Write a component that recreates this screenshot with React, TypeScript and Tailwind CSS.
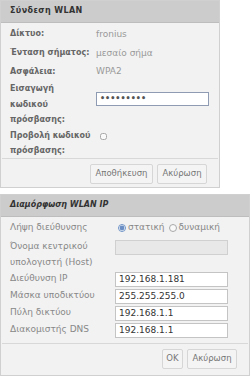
import React, { useState } from "react";

const font = { fontFamily: '"DejaVu Sans", Verdana, sans-serif' };

const Btn: React.FC<{ label: string; className?: string }> = ({ label, className }) => (
  <button className={"h-[20px] border border-[#d6d6d6] bg-[#f4f4f4] text-[8.5px] text-[#777] rounded-[2px] " + (className ?? "")}>
    {label}
  </button>
);

const IpRow: React.FC<{ label: string; value: string }> = ({ label, value }) => (
  <div className="flex items-center h-[17px]">
    <span className="w-[105px] text-[#888]">{label}</span>
    <input
      defaultValue={value}
      className="w-[113px] h-[15px] border border-[#c4c4c4] bg-white px-[3px] text-[9px] text-[#333] outline-none"
    />
  </div>
);

export default function App() {
  const [mode, setMode] = useState("static");
  const [show, setShow] = useState(false);

  return (
    <div className="w-[252px] h-[381px] bg-white text-[9px] leading-[1.3]" style={font}>
      {/* WLAN connection */}
      <div className="w-[220px] border border-[#d0d0d0] bg-[#f2f2f2]">
        <div className="h-[22px] flex items-center px-[9px] bg-[#cccccc] border-b border-[#bdbdbd] font-bold text-[8px] tracking-[0.4px] text-[#333]">
          Σύνδεση WLAN
        </div>
        <div className="px-[9px] pt-[2px] font-bold text-[8px] text-[#666]">
          <div className="flex items-center h-[19px]">
            <span className="w-[86px]">Δίκτυο:</span>
            <span className="font-normal text-[9px] text-[#999]">fronius</span>
          </div>
          <div className="flex items-center h-[19px]">
            <span className="w-[86px] whitespace-nowrap">Ένταση σήματος:</span>
            <span className="font-normal text-[9px] text-[#999]">μεσαίο σήμα</span>
          </div>
          <div className="flex items-center h-[18px]">
            <span className="w-[86px]">Ασφάλεια:</span>
            <span className="font-normal text-[9px] text-[#999]">WPA2</span>
          </div>
          <div className="flex items-start leading-[15.5px]">
            <span className="w-[86px]">
              Εισαγωγή
              <br />
              κωδικού
              <br />
              πρόσβασης:
            </span>
            <input
              type="password"
              defaultValue="password1"
              className="w-[113px] h-[14px] border border-[#8f9bb3] bg-white px-[3px] text-[8px] text-[#555] outline-none mt-[11px]"
            />
          </div>
          <div className="flex items-start leading-[15px]">
            <span className="w-[86px] whitespace-nowrap">
              Προβολή κωδικού
              <br />
              πρόσβασης:
            </span>
            <input
              type="checkbox"
              checked={show}
              onChange={(e) => setShow(e.target.checked)}
              className="w-[7px] h-[7px] ml-[4px] mt-[5px] accent-[#888] opacity-60"
            />
          </div>
        </div>
        <div className="border-t border-[#d8d8d8] mx-[1px] flex justify-end gap-[4px] pt-[5px] pb-[3px] pr-[11px]">
          <Btn label="Αποθήκευση" className="w-[63px]" />
          <Btn label="Ακύρωση" className="w-[50px]" />
        </div>
      </div>

      {/* WLAN IP */}
      <div className="mt-[6px] w-[250px] border border-[#d0d0d0] bg-[#f2f2f2]">
        <div className="h-[22px] flex items-center px-[9px] bg-[#cccccc] border-b border-[#bdbdbd] font-bold italic text-[8px] text-[#333]">
          Διαμόρφωση WLAN IP
        </div>
        <div className="px-[9px] pt-[2px] pb-[4px] text-[#888]">
          <div className="flex items-center h-[18px]">
            <span className="w-[108px]">Λήψη διεύθυνσης</span>
            <label className="flex items-center gap-[2px]">
              <input
                type="radio"
                checked={mode === "static"}
                onChange={() => setMode("static")}
                className="w-[8px] h-[8px] m-0 accent-[#6b8fc4]"
              />
              <span>στατική</span>
            </label>
            <label className="flex items-center gap-[2px] ml-[4px]">
              <input
                type="radio"
                checked={mode === "dynamic"}
                onChange={() => setMode("dynamic")}
                className="w-[8px] h-[8px] m-0 opacity-60"
              />
              <span>δυναμική</span>
            </label>
          </div>
          <div className="flex items-center leading-[16px] h-[34px]">
            <span className="w-[105px] whitespace-nowrap">
              Όνομα κεντρικού
              <br />
              υπολογιστή (Host)
            </span>
            <input
              disabled
              className="w-[113px] h-[15px] border border-[#d0d0d0] bg-[#e8e8e8] -mt-[12px]"
            />
          </div>
          <IpRow label="Διεύθυνση IP" value="192.168.1.181" />
          <IpRow label="Μάσκα υποδικτύου" value="255.255.255.0" />
          <IpRow label="Πύλη δικτύου" value="192.168.1.1" />
          <IpRow label="Διακομιστής DNS" value="192.168.1.1" />
        </div>
        <div className="border-t border-[#d8d8d8] mx-[1px] flex justify-end gap-[4px] pt-[5px] pb-[6px] pr-[11px]">
          <Btn label="OK" className="w-[21px]" />
          <Btn label="Ακύρωση" className="w-[50px]" />
        </div>
      </div>
    </div>
  );
}
